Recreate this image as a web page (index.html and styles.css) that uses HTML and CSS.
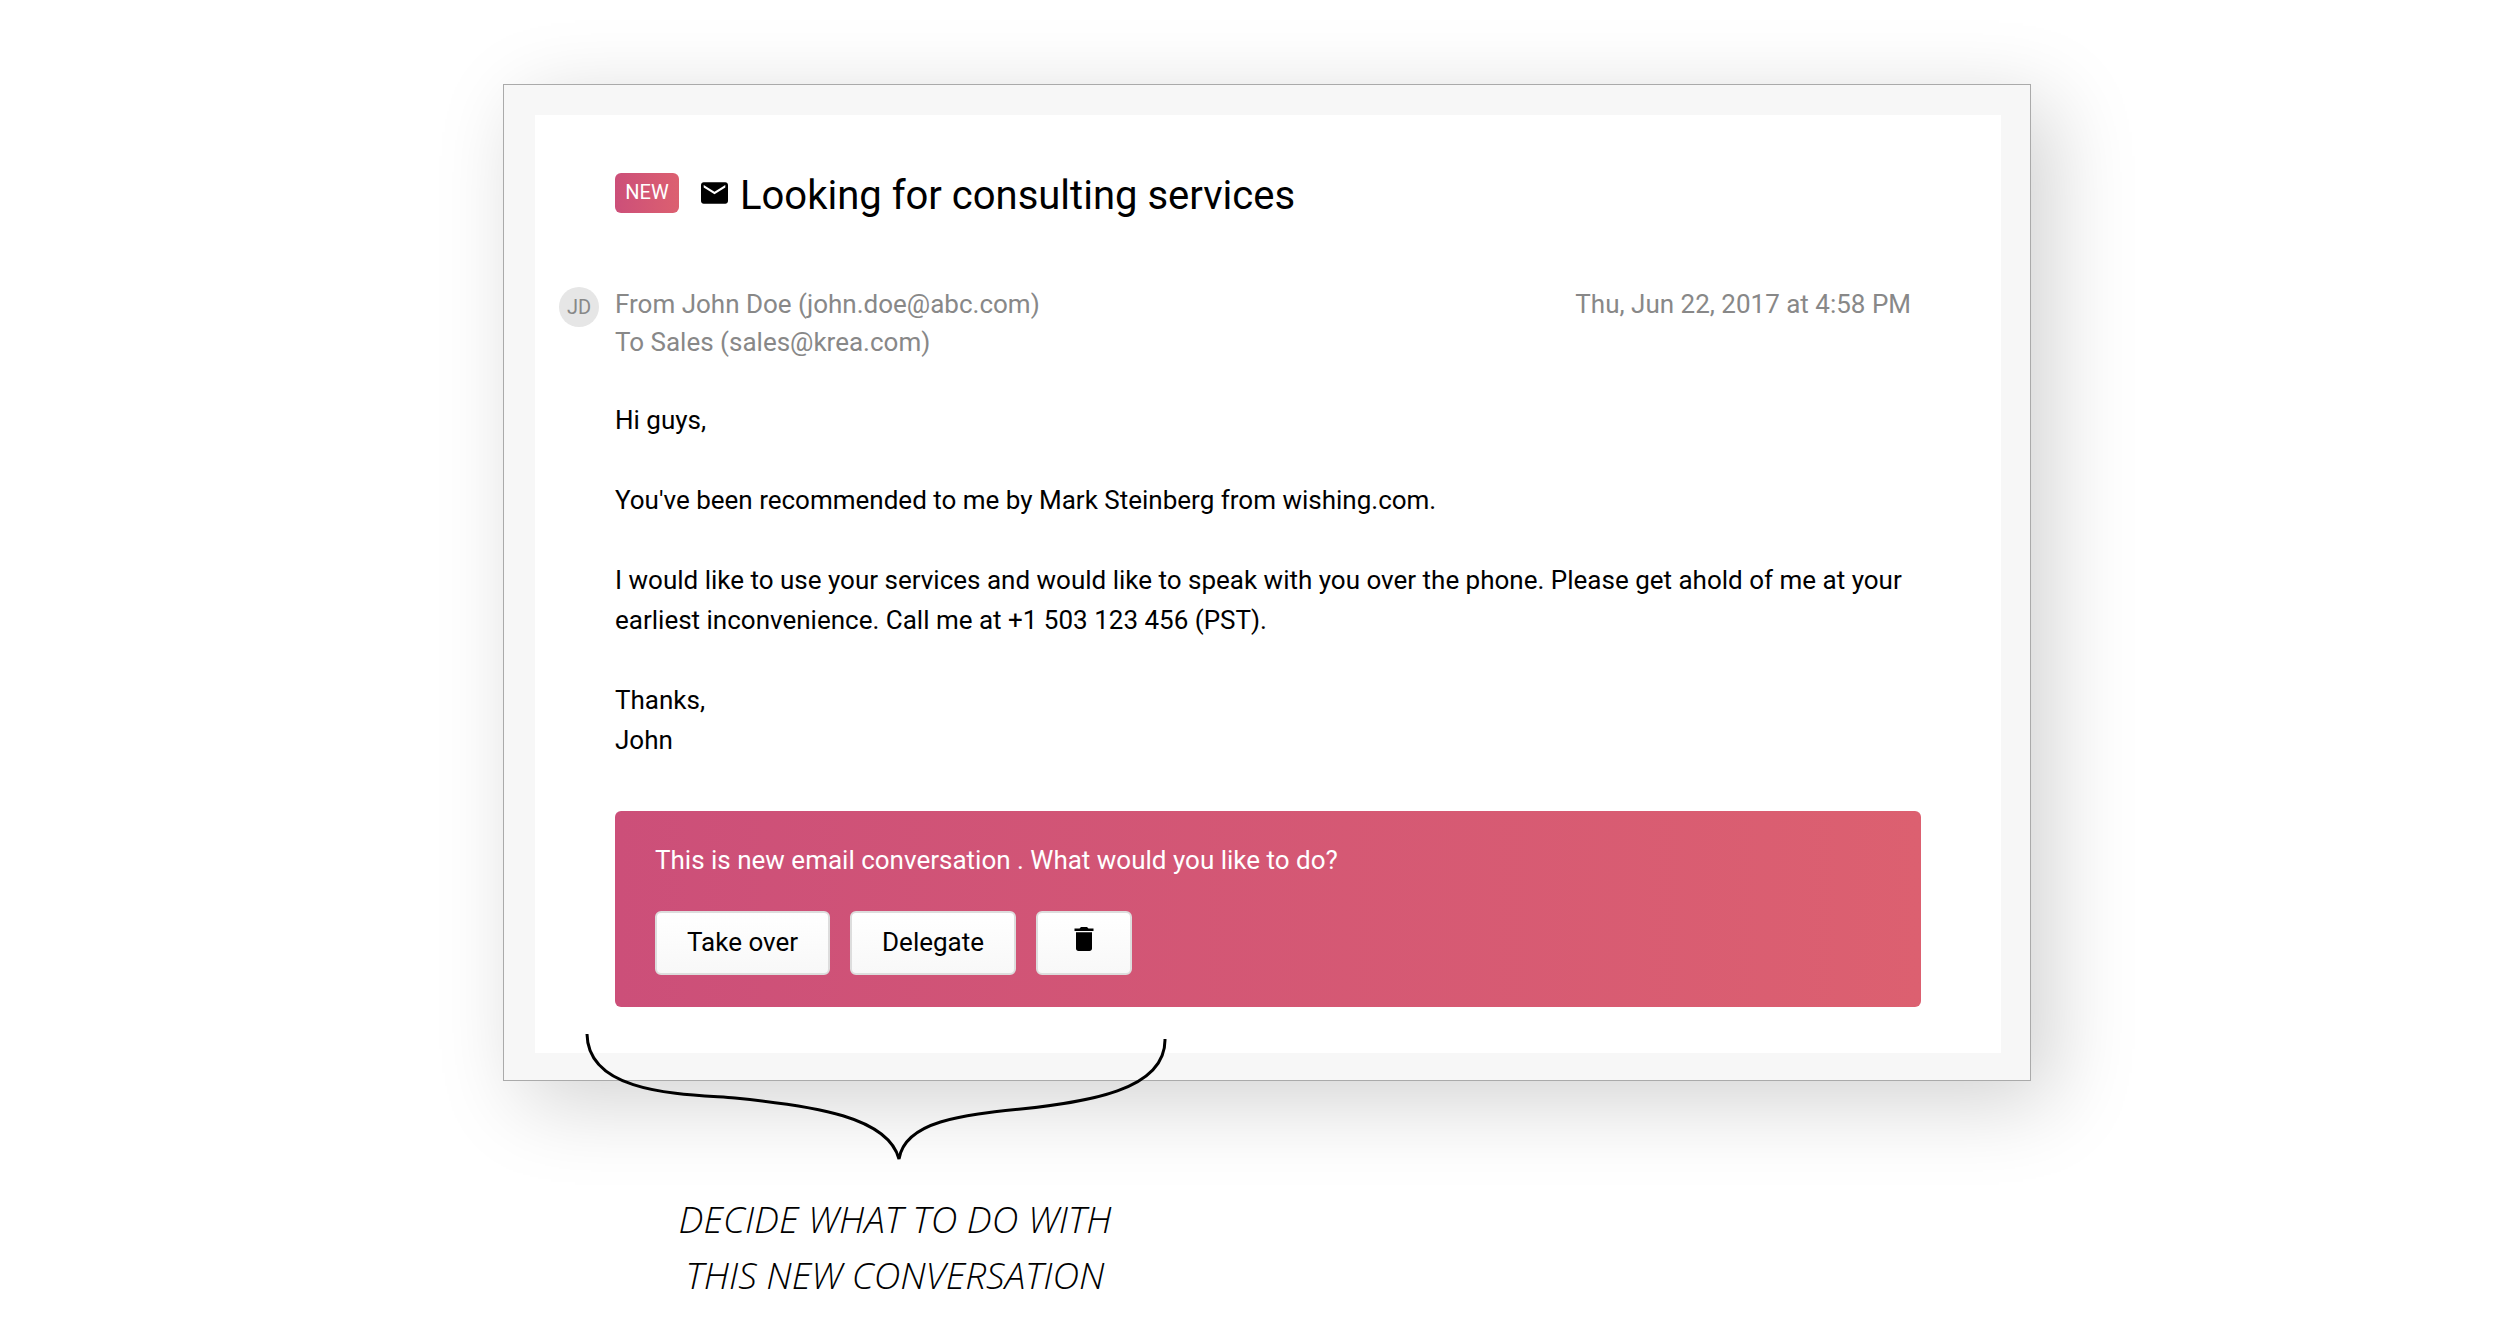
FILE: index.html
```
<!DOCTYPE html>
<html lang="en">
<head>
    <meta charset="utf-8">
    <title>Looking for consulting services</title>
    <link rel="stylesheet" href="styles.css">
</head>
<body>
    <main class="stage">
        <div class="frame">
            <article class="mail">
                <header class="mail-title">
                    <span class="badge">NEW</span>
                    <svg class="icon-mail" viewBox="2 4 20 16" aria-hidden="true">
                        <path d="M20 4H4c-1.1 0-2 .9-2 2v12c0 1.100.9 2 2 2h16c1.100 0 2-.9 2-2V6c0-1.100-.9-2-2-2zm0 4l-8 5-8-5V6l8 5 8-5v2z"/>
                    </svg>
                    <h1>Looking for consulting services</h1>
                </header>

                <div class="mail-meta">
                    <span class="avatar">JD</span>
                    <div class="people">
                        <div>From John Doe (john.doe@abc.com)</div>
                        <div>To Sales (sales@krea.com)</div>
                    </div>
                    <time datetime="2017-06-22T16:58">Thu, Jun 22, 2017 at 4:58 PM</time>
                </div>

                <div class="mail-body">
                    <p>Hi guys,</p>
                    <p>You've been recommended to me by Mark Steinberg from wishing.com.</p>
                    <p>I would like to use your services and would like to speak with you over the phone. Please get ahold of me at your earliest inconvenience. Call me at +1 503 123 456 (PST).</p>
                    <p>Thanks,<br>John</p>
                </div>

                <section class="prompt">
                    <p>This is new email conversation . What would you like to do?</p>
                    <div class="actions">
                        <button type="button" class="btn">Take over</button>
                        <button type="button" class="btn">Delegate</button>
                        <button type="button" class="btn btn-icon" aria-label="Delete">
                            <svg class="icon-trash" viewBox="0 0 20 24" aria-hidden="true">
                                <path d="M0.500 4V1.500h5L7 0h6l1.500 1.500h5V4zM2 5.200h16v16.300c0 1.400-1.100 2.500-2.500 2.500h-11C3.100 24 2 22.900 2 21.500z"/>
                            </svg>
                        </button>
                    </div>
                </section>
            </article>
        </div>

        <!-- hand drawn note, hooks onto the bottom of the frame -->
        <div class="note">
            <svg class="brace" viewBox="0 0 584 130" aria-hidden="true">
                <path d="M2 1C3 62 100 61 150 65C230 73 303 84 314 126C320 88 378 82 436 76C500 69 581 58 580 6"/>
            </svg>
            <p>DECIDE WHAT TO DO WITH<br>THIS NEW CONVERSATION</p>
        </div>
    </main>
</body>
</html>
```

FILE: styles.css
```
* {
    box-sizing: border-box;
}

body {
    margin: 0;
    background: #fff;
    color: #000;
    font-family: Roboto, "Liberation Sans", sans-serif;
    font-size: 26px;
    line-height: 40px;
}

h1,
p {
    margin: 0;
}

.stage {
    max-width: 1562px;
    margin: 0 auto;
    padding: 84px 0 0 34px;
}

.frame {
    padding: 30px 29px 27px 31px;
    border: 1px solid #aaa;
    background: #f7f7f7;
    box-shadow: 20px 20px 80px rgba(0, 0, 0, 0.18);
}

.mail {
    padding: 54px 80px 46px;
    background: #fff;
}

/* title */
.mail-title {
    display: flex;
    align-items: flex-start;
}

.mail-title h1 {
    font-size: 40px;
    font-weight: 400;
    line-height: 54px;
}

.badge {
    width: 64px;
    height: 40px;
    margin: 4px 22px 0 0;
    border-radius: 6px;
    background: linear-gradient(90deg, #cc4f79, #dc6070);
    color: #fff;
    font-size: 20px;
    line-height: 38px;
    text-align: center;
}

.icon-mail {
    width: 27px;
    height: 22px;
    margin: 13px 12px 0 0;
}

/* sender line */
.mail-meta {
    display: flex;
    align-items: flex-start;
    margin: 62px 10px 39px -56px;
    color: #888;
    line-height: 38px;
}

.avatar {
    width: 40px;
    height: 40px;
    margin: 2px 16px 0 0;
    border-radius: 50%;
    background: #e6e6e6;
    font-size: 20px;
    line-height: 40px;
    text-align: center;
}

.people {
    flex: 1;
}

.mail-body p + p {
    margin-top: 40px;
}

/* call to action */
.prompt {
    margin-top: 51px;
    padding: 29px 40px 32px;
    border-radius: 6px;
    background: linear-gradient(90deg, #cc4f79, #dc6070);
    color: #fff;
}

.actions {
    display: flex;
    gap: 20px;
    margin-top: 31px;
}

.btn {
    height: 64px;
    padding: 0 30px 2px;
    border: 2px solid #ddd;
    border-radius: 6px;
    background: linear-gradient(#fff, #f8f8f8);
    color: #000;
    font: inherit;
    cursor: pointer;
}

.btn-icon {
    width: 96px;
}

.icon-trash {
    width: 20px;
    height: 24px;
}

/* note */
.note {
    position: relative;
    width: 584px;
    margin: -48px 0 0 82px;
}

.brace {
    display: block;
    width: 584px;
    height: 130px;
    fill: none;
    stroke: #000;
    stroke-width: 3px;
}

.note p {
    margin-top: 28px;
    padding-left: 36px;
    font-family: "Liberation Sans Narrow", "Open Sans", sans-serif;
    font-size: 37px;
    font-style: italic;
    font-weight: 300;
    line-height: 56px;
    text-align: center;
}
```
